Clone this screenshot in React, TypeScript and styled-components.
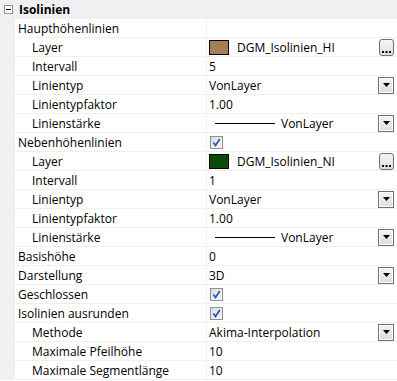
import styled, { createGlobalStyle } from "styled-components";

const GlobalStyle = createGlobalStyle`
  html, body {
    margin: 0;
    padding: 0;
    background: #fff;
  }
  body {
    font-family: "Open Sans", "Noto Sans", sans-serif;
    font-size: 12px;
    color: #000;
  }
`;

type Value =
  | { kind: "none" }
  | { kind: "text"; text: string }
  | { kind: "combo"; text: string }
  | { kind: "layer"; text: string; color: string }
  | { kind: "check" }
  | { kind: "lineweight"; text: string };

type Prop = { name: string; indent?: boolean; value: Value };

const props: Prop[] = [
  { name: "Haupthöhenlinien", value: { kind: "none" } },
  { name: "Layer", indent: true, value: { kind: "layer", text: "DGM_Isolinien_HI", color: "#a57e55" } },
  { name: "Intervall", indent: true, value: { kind: "text", text: "5" } },
  { name: "Linientyp", indent: true, value: { kind: "combo", text: "VonLayer" } },
  { name: "Linientypfaktor", indent: true, value: { kind: "text", text: "1.00" } },
  { name: "Linienstärke", indent: true, value: { kind: "lineweight", text: "VonLayer" } },
  { name: "Nebenhöhenlinien", value: { kind: "check" } },
  { name: "Layer", indent: true, value: { kind: "layer", text: "DGM_Isolinien_NI", color: "#0a4a0a" } },
  { name: "Intervall", indent: true, value: { kind: "text", text: "1" } },
  { name: "Linientyp", indent: true, value: { kind: "combo", text: "VonLayer" } },
  { name: "Linientypfaktor", indent: true, value: { kind: "text", text: "1.00" } },
  { name: "Linienstärke", indent: true, value: { kind: "lineweight", text: "VonLayer" } },
  { name: "Basishöhe", value: { kind: "text", text: "0" } },
  { name: "Darstellung", value: { kind: "combo", text: "3D" } },
  { name: "Geschlossen", value: { kind: "check" } },
  { name: "Isolinien ausrunden", value: { kind: "check" } },
  { name: "Methode", indent: true, value: { kind: "combo", text: "Akima-Interpolation" } },
  { name: "Maximale Pfeilhöhe", indent: true, value: { kind: "text", text: "10" } },
  { name: "Maximale Segmentlänge", indent: true, value: { kind: "text", text: "10" } },
];

function ValueCell({ value }: { value: Value }) {
  switch (value.kind) {
    case "none":
      return <Cell />;
    case "text":
      return <Cell>{value.text}</Cell>;
    case "combo":
      return (
        <Cell>
          <Grow>{value.text}</Grow>
          <DropButton>
            <svg width="7" height="4" viewBox="0 0 7 4">
              <path d="M0 0h7L3.5 4z" fill="#000" />
            </svg>
          </DropButton>
        </Cell>
      );
    case "layer":
      return (
        <Cell>
          <Swatch $color={value.color} />
          <Grow>{value.text}</Grow>
          <DotsButton>
            <svg width="9" height="3" viewBox="0 0 9 3">
              <rect x="0" y="0" width="2" height="2" fill="#000" />
              <rect x="3.5" y="0" width="2" height="2" fill="#000" />
              <rect x="7" y="0" width="2" height="2" fill="#000" />
            </svg>
          </DotsButton>
        </Cell>
      );
    case "check":
      return (
        <Cell>
          <CheckBox>
            <svg width="11" height="11" viewBox="0 0 11 11">
              <path d="M2.5 5.5 L4.5 8.5 L8.8 2" stroke="#2b4ec4" strokeWidth="1.7" fill="none" />
            </svg>
          </CheckBox>
        </Cell>
      );
    case "lineweight":
      return (
        <Cell>
          <LineSample />
          <Grow>{value.text}</Grow>
          <DropButton>
            <svg width="7" height="4" viewBox="0 0 7 4">
              <path d="M0 0h7L3.5 4z" fill="#000" />
            </svg>
          </DropButton>
        </Cell>
      );
  }
}

export default function App() {
  return (
    <>
      <GlobalStyle />
      <Panel>
        <Header>
          <Toggle>
            <svg width="5" height="1" viewBox="0 0 5 1">
              <rect width="5" height="1" fill="#000" />
            </svg>
          </Toggle>
          <HeaderTitle>Isolinien</HeaderTitle>
        </Header>
        {props.map((p, i) => (
          <Row key={i}>
            <Gutter />
            <Name $indent={!!p.indent}>{p.name}</Name>
            <ValueCell value={p.value} />
          </Row>
        ))}
      </Panel>
    </>
  );
}

const Panel = styled.div`
  width: 397px;
  display: flex;
  flex-direction: column;
`;

const Header = styled.div`
  height: 19px;
  background: #f0f0f0;
  display: flex;
  align-items: center;
`;

const Toggle = styled.div`
  width: 7px;
  height: 7px;
  margin: 0 6px 0 4px;
  border: 1px solid #919191;
  background: #fff;
  display: flex;
  align-items: center;
  justify-content: center;
`;

const HeaderTitle = styled.span`
  font-weight: 700;
`;

const Row = styled.div`
  display: grid;
  grid-template-columns: 15px 192px 1fr;
  height: 19px;
`;

const Gutter = styled.div`
  background: #f0f0f0;
`;

const Name = styled.div<{ $indent: boolean }>`
  border-bottom: 1px solid #f0f0f0;
  border-right: 1px solid #f0f0f0;
  padding-left: ${(p) => (p.$indent ? "17px" : "3px")};
  display: flex;
  align-items: center;
  white-space: nowrap;
  overflow: hidden;
`;

const Cell = styled.div`
  border-bottom: 1px solid #f0f0f0;
  padding: 0 3px 0 2px;
  display: flex;
  align-items: center;
  white-space: nowrap;
  min-width: 0;
`;

const Grow = styled.span`
  flex: 1;
`;

const Swatch = styled.span<{ $color: string }>`
  width: 18px;
  height: 13px;
  border: 1px solid #000;
  background: ${(p) => p.$color};
  margin-right: 8px;
`;

const DropButton = styled.span`
  width: 14px;
  height: 15px;
  border: 1px solid #707070;
  background: linear-gradient(#f4f4f4, #dcdcdc);
  box-shadow: inset 0 0 0 1px #fff;
  display: flex;
  align-items: center;
  justify-content: center;
`;

const DotsButton = styled.span`
  width: 13px;
  height: 14px;
  border: 1px solid #707070;
  border-radius: 3px;
  background: linear-gradient(#f6f6f6, #dedede);
  display: flex;
  align-items: flex-end;
  justify-content: center;
  padding-bottom: 1px;
  box-sizing: content-box;
`;

const CheckBox = styled.span`
  width: 11px;
  height: 11px;
  border: 1px solid #8f8f8f;
  background: linear-gradient(135deg, #dcdcdc, #f8f8f8);
  display: flex;
  align-items: center;
  justify-content: center;
  margin-left: 1px;
`;

const LineSample = styled.span`
  width: 60px;
  height: 1px;
  background: #000;
  margin: 0 6px 0 6px;
`;
